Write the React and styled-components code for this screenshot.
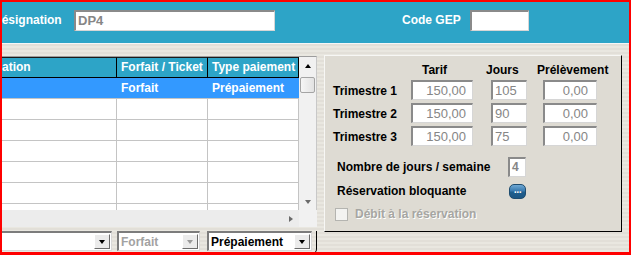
import React from 'react';
import styled, { createGlobalStyle } from 'styled-components';

const Global = createGlobalStyle`
  html, body { margin: 0; padding: 0; background: #fff; overflow: hidden; }
  body { font-family: "Liberation Sans", Arial, sans-serif; }
  * { box-sizing: border-box; }
`;

const Frame = styled.div`
  width: 631px;
  height: 255px;
  border-style: solid;
  border-color: #ff0000;
  border-width: 2px 2px 3px 2px;
  overflow: hidden;
  background: repeating-linear-gradient(
    to bottom,
    #e9e7e0 0px, #e9e7e0 2px, #e2dfd8 2px, #e2dfd8 4px
  );
  display: flex;
  flex-direction: column;
`;

const TopBar = styled.div`
  height: 42px;
  flex: none;
  background: #2da4c7;
  border-bottom: 1px solid #f6f6f6;
  display: flex;
  align-items: flex-start;
  padding-top: 8px;
`;

const BarLabel = styled.span`
  width: ${p => p.$width}px;
  margin-left: ${p => p.$offset || 0}px;
  color: #fff;
  font-weight: bold;
  font-size: 12px;
  line-height: 21px;
  white-space: nowrap;
  flex: none;
`;

const SunkenField = styled.div`
  width: ${p => p.$width}px;
  height: ${p => p.$height || 20}px;
  flex: none;
  background: #fff;
  border-style: solid;
  border-width: 2px 1px 1px 2px;
  border-color: #8a8a8a #d6d6d6 #d6d6d6 #8a8a8a;
  color: #868686;
  font-size: ${p => p.$size || 13}px;
  font-weight: ${p => (p.$bold ? 'bold' : 'normal')};
  line-height: ${p => (p.$height || 20) - 3}px;
  padding: 0 ${p => p.$padRight || 2}px 0 2px;
  text-align: ${p => p.$align || 'left'};
  white-space: nowrap;
  overflow: hidden;
`;

const Body = styled.div`
  flex: 1;
  display: flex;
  align-items: flex-start;
`;

const GridSection = styled.div`
  margin-left: -44px;
  margin-top: 12px;
  width: 359px;
  display: flex;
  flex-direction: column;
  flex: none;
`;

const TableBox = styled.div`
  display: flex;
  border-top: 1px solid #9c9c9c;
  border-right: 1px solid #c8c8c8;
`;

const Columns = styled.div`
  width: 341px;
  display: flex;
  flex-direction: column;
`;

const HeaderRow = styled.div`
  display: grid;
  grid-template-columns: 159px 91px 91px;
  height: 21px;
`;

const HeaderCell = styled.div`
  background: #2da4c7;
  border-right: 1px solid #000;
  border-bottom: 1px solid #000;
  border-top: 1px solid #1a1a1a;
  color: #fff;
  font-weight: bold;
  font-size: 12px;
  line-height: 18px;
  padding-left: 4px;
  white-space: nowrap;
  overflow: hidden;
`;

const RowsArea = styled.div`
  height: 132px;
  overflow: hidden;
  background: #fff;
`;

const Row = styled.div`
  display: grid;
  grid-template-columns: 159px 91px 91px;
  height: 21px;
  background: ${p => (p.$selected ? '#3399ff' : '#fff')};
  border-bottom: 1px solid #c4c4c4;
`;

const Cell = styled.div`
  border-right: 1px solid ${p => (p.$selected ? '#3399ff' : '#c4c4c4')};
  color: #fff;
  font-weight: bold;
  font-size: 12px;
  line-height: 20px;
  padding-left: 4px;
  white-space: nowrap;
`;

const VScroll = styled.div`
  width: 17px;
  height: 153px;
  background: #f1f1f1;
  display: flex;
  flex-direction: column;
  align-items: center;
`;

const ArrowBox = styled.div`
  height: 17px;
  width: 17px;
  flex: none;
  display: flex;
  align-items: center;
  justify-content: center;
`;

const Tri = styled.span`
  width: 0;
  height: 0;
  border-style: solid;
  ${p => p.$dir === 'up' && `
    border-width: 0 3.5px 4px 3.5px;
    border-color: transparent transparent ${p.$color} transparent;
  `}
  ${p => p.$dir === 'down' && `
    border-width: 4px 3.5px 0 3.5px;
    border-color: ${p.$color} transparent transparent transparent;
  `}
  ${p => p.$dir === 'right' && `
    border-width: 3.5px 0 3.5px 4px;
    border-color: transparent transparent transparent ${p.$color};
  `}
`;

const Thumb = styled.div`
  width: 15px;
  height: 16px;
  margin-top: 3px;
  flex: none;
  border: 1px solid #a4a4a4;
  border-radius: 2px;
  background: linear-gradient(to right, #f6f6f6, #e2e2e2);
`;

const Spacer = styled.div`
  flex: 1;
`;

const HScrollRow = styled.div`
  display: flex;
  height: 17px;
`;

const HTrack = styled.div`
  width: 341px;
  background: #ececec;
  display: flex;
  justify-content: flex-end;
`;

const Corner = styled.div`
  width: 18px;
  background: #f1f1f1;
`;

const ComboRow = styled.div`
  margin-top: 4px;
  height: 23px;
  padding-bottom: 3px;
  width: 359px;
  display: flex;
  border-right: 1px solid #000;
  border-bottom: 1px solid #000;
  border-bottom-right-radius: 5px;
`;

const Combo = styled.div`
  width: ${p => p.$width}px;
  margin-left: ${p => p.$gap || 0}px;
  height: 20px;
  flex: none;
  background: #fff;
  border-style: solid;
  border-width: 2px 1px 1px 2px;
  border-color: #7c7c7c #d8d8d8 #d8d8d8 #7c7c7c;
  display: flex;
  align-items: center;
  padding-left: 2px;
  color: ${p => (p.$disabled ? '#a2a2a2' : '#000')};
  font-weight: bold;
  font-size: 12px;
`;

const ComboText = styled.span`
  flex: 1;
  white-space: nowrap;
`;

const DropBtn = styled.div`
  width: 16px;
  height: 15px;
  margin-right: 1px;
  flex: none;
  background: #ebebeb;
  border-style: solid;
  border-width: 1px;
  border-color: #fff #6c6c6c #6c6c6c #fff;
  display: flex;
  align-items: center;
  justify-content: center;
`;

const Panel = styled.div`
  margin-left: 7px;
  margin-top: 11px;
  width: 298px;
  height: 177px;
  flex: none;
  background: #dedbd3;
  border-style: solid;
  border-width: 1px;
  border-color: #f7f7f5 #000 #000 #f7f7f5;
  padding: 7px 0 0 8px;
  display: flex;
  flex-direction: column;
`;

const QuarterGrid = styled.div`
  display: grid;
  grid-template-columns: 78px 80px 52px 54px;
  grid-auto-rows: 20px;
  grid-template-rows: 14px;
  row-gap: 3px;
  align-items: center;
`;

const ColHead = styled.div`
  margin-left: ${p => p.$offset}px;
  font-weight: bold;
  font-size: 12px;
  line-height: 14px;
  color: #000;
  white-space: nowrap;
`;

const RowLabel = styled.div`
  font-weight: bold;
  font-size: 12px;
  color: #000;
  white-space: nowrap;
  padding-top: 1px;
`;

const OptionRow = styled.div`
  display: flex;
  align-items: center;
  height: 20px;
  margin-top: ${p => p.$top}px;
  padding-left: ${p => p.$indent || 0}px;
`;

const OptionLabel = styled.span`
  width: ${p => p.$width}px;
  flex: none;
  font-weight: bold;
  font-size: 12px;
  color: #000;
  white-space: nowrap;
`;

const DotsButton = styled.div`
  width: 17px;
  height: 15px;
  flex: none;
  border-radius: 5px;
  border: 1px solid #1f4d70;
  background: linear-gradient(to bottom, #6fa8d4 0%, #3a7bb0 45%, #205f8e 55%, #1c5684 100%);
  color: #fff;
  font-family: "DejaVu Sans", sans-serif;
  font-size: 8px;
  font-weight: bold;
  line-height: 11px;
  text-align: center;
  letter-spacing: -0.5px;
`;

const CheckBox = styled.span`
  width: 13px;
  height: 13px;
  flex: none;
  margin-left: 2px;
  background: #f3f3f1;
  border: 1px solid #b4b4b0;
`;

const DisabledLabel = styled.span`
  margin-left: 7px;
  font-weight: bold;
  font-size: 12px;
  color: #a6a6a2;
  text-shadow: 1px 1px 0 #fff;
  white-space: nowrap;
`;

const quarters = [
  { label: 'Trimestre 1', tarif: '150,00', jours: '105', prel: '0,00' },
  { label: 'Trimestre 2', tarif: '150,00', jours: '90', prel: '0,00' },
  { label: 'Trimestre 3', tarif: '150,00', jours: '75', prel: '0,00' },
];

export default function App() {
  const emptyRows = [0, 1, 2, 3, 4, 5];
  return (
    <>
      <Global />
      <Frame>
        <TopBar>
          <BarLabel $offset={-9} $width={81}>Désignation</BarLabel>
          <SunkenField $width={201} $height={21} $bold $size={13}>DP4</SunkenField>
          <BarLabel $offset={127} $width={68}>Code GEP</BarLabel>
          <SunkenField $width={59} $height={21} />
        </TopBar>
        <Body>
          <GridSection>
            <TableBox>
              <Columns>
                <HeaderRow>
                  <HeaderCell>Désignation</HeaderCell>
                  <HeaderCell>Forfait / Ticket</HeaderCell>
                  <HeaderCell>Type paiement</HeaderCell>
                </HeaderRow>
                <RowsArea>
                  <Row $selected>
                    <Cell $selected>DP4</Cell>
                    <Cell $selected>Forfait</Cell>
                    <Cell $selected>Prépaiement</Cell>
                  </Row>
                  {emptyRows.map(i => (
                    <Row key={i}>
                      <Cell />
                      <Cell />
                      <Cell />
                    </Row>
                  ))}
                </RowsArea>
              </Columns>
              <VScroll>
                <ArrowBox><Tri $dir="up" $color="#000" /></ArrowBox>
                <Thumb />
                <Spacer />
                <ArrowBox><Tri $dir="down" $color="#6a6a6a" /></ArrowBox>
              </VScroll>
            </TableBox>
            <HScrollRow>
              <HTrack>
                <ArrowBox><Tri $dir="right" $color="#6a6a6a" /></ArrowBox>
              </HTrack>
              <Corner />
            </HScrollRow>
            <ComboRow>
              <Combo $width={154}>
                <ComboText>DP4</ComboText>
                <DropBtn><Tri $dir="down" $color="#000" /></DropBtn>
              </Combo>
              <Combo $width={83} $gap={5} $disabled>
                <ComboText>Forfait</ComboText>
                <DropBtn><Tri $dir="down" $color="#9a9a9a" /></DropBtn>
              </Combo>
              <Combo $width={105} $gap={7}>
                <ComboText>Prépaiement</ComboText>
                <DropBtn><Tri $dir="down" $color="#000" /></DropBtn>
              </Combo>
            </ComboRow>
          </GridSection>
          <Panel>
            <QuarterGrid>
              <span />
              <ColHead $offset={11}>Tarif</ColHead>
              <ColHead $offset={-5}>Jours</ColHead>
              <ColHead $offset={-6}>Prélèvement</ColHead>
              {quarters.map(q => (
                <React.Fragment key={q.label}>
                  <RowLabel>{q.label}</RowLabel>
                  <SunkenField $width={62} $align="right" $padRight={6}>{q.tarif}</SunkenField>
                  <SunkenField $width={36}>{q.jours}</SunkenField>
                  <SunkenField $width={54} $align="right" $padRight={8}>{q.prel}</SunkenField>
                </React.Fragment>
              ))}
            </QuarterGrid>
            <OptionRow $top={11} $indent={4}>
              <OptionLabel $width={171}>Nombre de jours / semaine</OptionLabel>
              <SunkenField $width={18} $bold $size={12}>4</SunkenField>
            </OptionRow>
            <OptionRow $top={4} $indent={4}>
              <OptionLabel $width={172}>Réservation bloquante</OptionLabel>
              <DotsButton>...</DotsButton>
            </OptionRow>
            <OptionRow $top={3}>
              <CheckBox />
              <DisabledLabel>Débit à la réservation</DisabledLabel>
            </OptionRow>
          </Panel>
        </Body>
      </Frame>
    </>
  );
}
